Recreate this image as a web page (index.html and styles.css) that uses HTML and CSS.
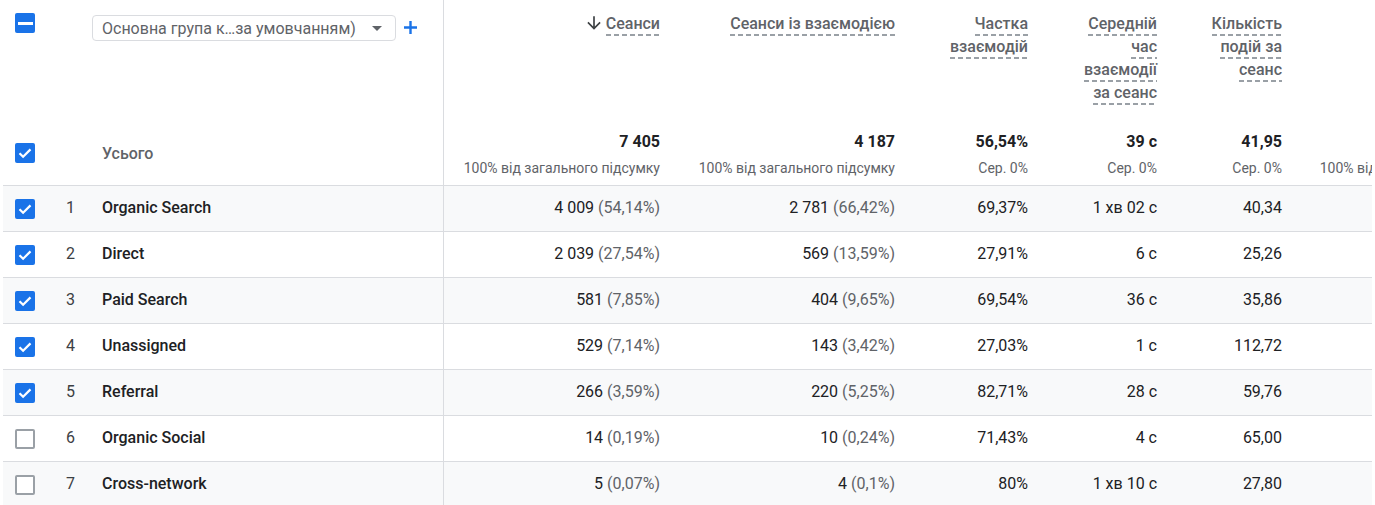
FILE: index.html
```html
<!DOCTYPE html>
<html lang="uk">
<head>
<meta charset="utf-8">
<title>Звіт</title>
<link rel="stylesheet" href="styles.css">
</head>
<body>
<div class="report">
  <div class="table">
    <div class="head">
      <div class="hcell hleft">
        <div class="htop">
          <span class="cb cb-ind"><span class="bar"></span></span>
          <div class="dd">
            <span class="dd-text">Основна група к…за умовчанням)</span>
            <svg class="dd-arrow" width="10" height="5" viewBox="0 0 10 5"><polygon points="0,0 10,0 5,5" fill="#5f6368"/></svg>
          </div>
          <svg class="plus" width="13" height="13" viewBox="0 0 13 13"><path d="M6.5 0v13M0 6.5h13" stroke="#1a73e8" stroke-width="2.4" fill="none"/></svg>
        </div>
        <div class="hbottom">
          <span class="cb cb-on"><svg width="20" height="20" viewBox="0 0 20 20"><path d="M4.5 10.2l3.6 3.6 7.4-7.4" stroke="#fff" stroke-width="2.2" fill="none"/></svg></span>
          <span class="total-label">Усього</span>
        </div>
      </div>
      <div class="hcell hmetric">
        <div class="label"><svg class="sort" width="20" height="20" viewBox="0 0 24 24"><path d="M20 12l-1.41-1.41L13 16.17V4h-2v12.17l-5.58-5.59L4 12l8 8 8-8z" fill="#3c4043"/></svg><span class="lbl">Сеанси</span></div>
        <div class="tot">7 405</div>
        <div class="sub">100% від загального підсумку</div>
      </div>
      <div class="hcell hmetric">
        <div class="label"><span class="lbl">Сеанси із взаємодією</span></div>
        <div class="tot">4 187</div>
        <div class="sub">100% від загального підсумку</div>
      </div>
      <div class="hcell hmetric">
        <div class="label"><span class="lbl">Частка взаємодій</span></div>
        <div class="tot">56,54%</div>
        <div class="sub">Сер. 0%</div>
      </div>
      <div class="hcell hmetric narrow">
        <div class="label"><span class="lbl">Середній час взаємодії за сеанс</span></div>
        <div class="tot">39 с</div>
        <div class="sub">Сер. 0%</div>
      </div>
      <div class="hcell hmetric">
        <div class="label"><span class="lbl">Кількість подій за сеанс</span></div>
        <div class="tot">41,95</div>
        <div class="sub">Сер. 0%</div>
      </div>
      <div class="hcell hmetric">
        <div class="label"></div>
        <div class="tot">&nbsp;</div>
        <div class="sub">100% від загального підсумку</div>
      </div>
    </div>

    <div class="row alt">
      <div class="cell left"><span class="cb cb-on"><svg width="20" height="20" viewBox="0 0 20 20"><path d="M4.5 10.2l3.6 3.6 7.4-7.4" stroke="#fff" stroke-width="2.2" fill="none"/></svg></span><span class="num">1</span><span class="name">Organic Search</span></div>
      <div class="cell m">4 009 <span class="pct">(54,14%)</span></div>
      <div class="cell m">2 781 <span class="pct">(66,42%)</span></div>
      <div class="cell m">69,37%</div>
      <div class="cell m">1 хв 02 с</div>
      <div class="cell m">40,34</div>
      <div class="cell m"></div>
    </div>
    <div class="row">
      <div class="cell left"><span class="cb cb-on"><svg width="20" height="20" viewBox="0 0 20 20"><path d="M4.5 10.2l3.6 3.6 7.4-7.4" stroke="#fff" stroke-width="2.2" fill="none"/></svg></span><span class="num">2</span><span class="name">Direct</span></div>
      <div class="cell m">2 039 <span class="pct">(27,54%)</span></div>
      <div class="cell m">569 <span class="pct">(13,59%)</span></div>
      <div class="cell m">27,91%</div>
      <div class="cell m">6 с</div>
      <div class="cell m">25,26</div>
      <div class="cell m"></div>
    </div>
    <div class="row alt">
      <div class="cell left"><span class="cb cb-on"><svg width="20" height="20" viewBox="0 0 20 20"><path d="M4.5 10.2l3.6 3.6 7.4-7.4" stroke="#fff" stroke-width="2.2" fill="none"/></svg></span><span class="num">3</span><span class="name">Paid Search</span></div>
      <div class="cell m">581 <span class="pct">(7,85%)</span></div>
      <div class="cell m">404 <span class="pct">(9,65%)</span></div>
      <div class="cell m">69,54%</div>
      <div class="cell m">36 с</div>
      <div class="cell m">35,86</div>
      <div class="cell m"></div>
    </div>
    <div class="row">
      <div class="cell left"><span class="cb cb-on"><svg width="20" height="20" viewBox="0 0 20 20"><path d="M4.5 10.2l3.6 3.6 7.4-7.4" stroke="#fff" stroke-width="2.2" fill="none"/></svg></span><span class="num">4</span><span class="name">Unassigned</span></div>
      <div class="cell m">529 <span class="pct">(7,14%)</span></div>
      <div class="cell m">143 <span class="pct">(3,42%)</span></div>
      <div class="cell m">27,03%</div>
      <div class="cell m">1 с</div>
      <div class="cell m">112,72</div>
      <div class="cell m"></div>
    </div>
    <div class="row alt">
      <div class="cell left"><span class="cb cb-on"><svg width="20" height="20" viewBox="0 0 20 20"><path d="M4.5 10.2l3.6 3.6 7.4-7.4" stroke="#fff" stroke-width="2.2" fill="none"/></svg></span><span class="num">5</span><span class="name">Referral</span></div>
      <div class="cell m">266 <span class="pct">(3,59%)</span></div>
      <div class="cell m">220 <span class="pct">(5,25%)</span></div>
      <div class="cell m">82,71%</div>
      <div class="cell m">28 с</div>
      <div class="cell m">59,76</div>
      <div class="cell m"></div>
    </div>
    <div class="row">
      <div class="cell left"><span class="cb cb-off"></span><span class="num">6</span><span class="name">Organic Social</span></div>
      <div class="cell m">14 <span class="pct">(0,19%)</span></div>
      <div class="cell m">10 <span class="pct">(0,24%)</span></div>
      <div class="cell m">71,43%</div>
      <div class="cell m">4 с</div>
      <div class="cell m">65,00</div>
      <div class="cell m"></div>
    </div>
    <div class="row alt">
      <div class="cell left"><span class="cb cb-off"></span><span class="num">7</span><span class="name">Cross-network</span></div>
      <div class="cell m">5 <span class="pct">(0,07%)</span></div>
      <div class="cell m">4 <span class="pct">(0,1%)</span></div>
      <div class="cell m">80%</div>
      <div class="cell m">1 хв 10 с</div>
      <div class="cell m">27,80</div>
      <div class="cell m"></div>
    </div>
  </div>
</div>
</body>
</html>
```

FILE: styles.css
```css
* { box-sizing: border-box; }
html, body { margin: 0; padding: 0; background: #fff; }
body {
  font-family: Roboto, "Noto Sans", "Liberation Sans", sans-serif;
  color: #202124;
  overflow: hidden;
  height: 505px;
}
.report {
  margin: 0 3px;
  width: 1369px;
  height: 505px;
  overflow: hidden;
}
.table {
  width: 1529px;
  --cols: 441px 232px 235px 133px 129px 125px 234px;
}
.head, .row {
  display: grid;
  grid-template-columns: var(--cols);
  border-bottom: 1px solid #dadce0;
}
.head { height: 186px; }
.row { height: 46px; }
.row.alt { background: #f8f9fa; }

.hleft, .left { border-right: 1px solid #dadce0; }

/* header left */
.hleft {
  display: flex;
  flex-direction: column;
  justify-content: space-between;
  padding: 13px 0 22px 12px;
}
.htop { display: flex; align-items: flex-start; }
.dd {
  margin-left: 57px;
  margin-top: 2px;
  width: 304px;
  height: 26px;
  border: 1px solid #dadce0;
  border-radius: 4px;
  display: flex;
  align-items: center;
  padding-left: 9px;
}
.dd-text {
  flex: 1;
  font-size: 16px;
  color: #5f6368;
  white-space: nowrap;
}
.dd-arrow { margin-right: 13px; }
.plus { margin-left: 8px; margin-top: 8px; }
.hbottom { display: flex; align-items: center; }
.total-label {
  margin-left: 67px;
  font-size: 16px;
  font-weight: 500;
  color: #5f6368;
}

/* checkboxes */
.cb {
  flex: none;
  width: 20px;
  height: 20px;
  border-radius: 2px;
  display: inline-flex;
  align-items: center;
  justify-content: center;
}
.cb-on, .cb-ind { background: #1a73e8; }
.cb svg { display: block; }
.cb-ind .bar { width: 15px; height: 3px; background: #fff; }
.cb-off { border: 2px solid #9aa0a6; background: #fff; }

/* header metrics */
.hmetric {
  display: flex;
  flex-direction: column;
  align-items: flex-end;
  padding: 12px 16px 8px;
  text-align: right;
}
.hmetric.narrow { padding-left: 30px; }
.label {
  font-size: 16px;
  font-weight: 500;
  line-height: 23px;
  color: #5f6368;
  margin-bottom: auto;
}
.lbl {
  padding-bottom: 3px;
  background: repeating-linear-gradient(90deg, #9aa0a6 0 5px, transparent 5px 8px) left bottom / 100% 2px no-repeat;
  -webkit-box-decoration-break: clone;
  box-decoration-break: clone;
}
.sort { display: inline-block; vertical-align: -4px; margin-right: 2px; }
.tot {
  font-size: 16px;
  font-weight: 700;
  line-height: 20px;
  color: #202124;
  white-space: nowrap;
}
.sub {
  margin-top: 7px;
  font-size: 14px;
  line-height: 18px;
  color: #5f6368;
  white-space: nowrap;
}

/* data rows */
.cell {
  display: flex;
  align-items: center;
  font-size: 16px;
  white-space: nowrap;
  padding-bottom: 2px;
}
.left { padding-left: 12px; }
.left .cb { margin-top: 2px; }
.num {
  margin-left: 15px;
  width: 41px;
  text-align: center;
  color: #3c4043;
}
.name {
  margin-left: 11px;
  font-weight: 500;
  color: #202124;
}
.m {
  justify-content: flex-end;
  padding-right: 16px;
  color: #202124;
}
.pct { color: #5f6368; margin-left: 4px; }
```
